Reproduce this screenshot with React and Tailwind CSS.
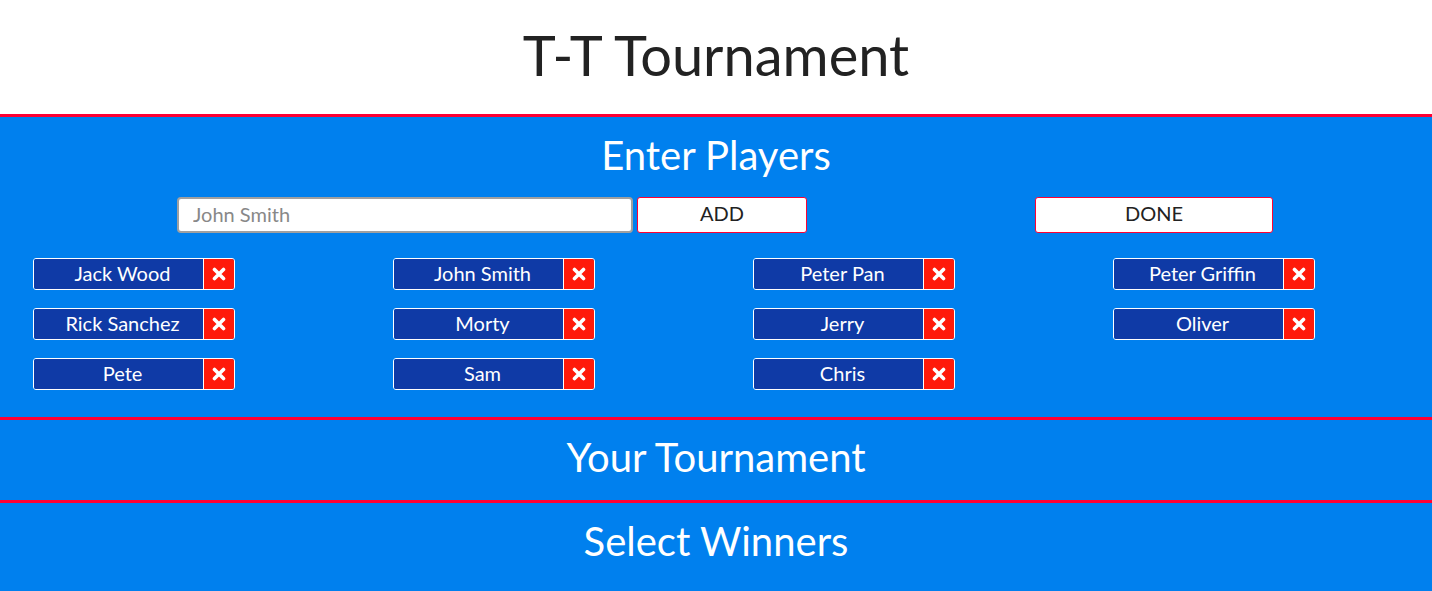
const players = [
  'Jack Wood', 'John Smith', 'Peter Pan', 'Peter Griffin',
  'Rick Sanchez', 'Morty', 'Jerry', 'Oliver',
  'Pete', 'Sam', 'Chris',
];

function PlayerTag({ name }) {
  return (
    <div className="flex h-8 w-[202px] overflow-hidden rounded-[3px] border border-white">
      <div className="flex flex-1 items-center justify-center bg-[#0f3aa6] pb-[3px] pl-[8px] text-[20px] text-white">
        {name}
      </div>
      <button className="flex w-[31px] items-center justify-center border-l border-white bg-[#ff1a0a]">
        <svg width="14" height="14" viewBox="0 0 14 14">
          <path d="M2.5 2.5 L11.5 11.5 M11.5 2.5 L2.5 11.5" stroke="white" strokeWidth="3.6" strokeLinecap="round" />
        </svg>
      </button>
    </div>
  );
}

export default function App() {
  return (
    <div className="min-h-screen bg-[#0080ee] font-['Lato','Liberation_Sans',sans-serif]">
      <header className="flex h-[114px] items-center justify-center bg-white pb-[4px]">
        <h1 className="text-[56px] text-[#222]">T-T Tournament</h1>
      </header>

      <section className="h-[303px] border-t-[3px] border-[#ff0033]">
        <h2 className="pt-[14px] text-center text-[40px] leading-[48px] text-white">Enter Players</h2>
        <div className="mt-[18px] flex h-9">
          <input
            className="ml-[177px] h-9 w-[456px] rounded-[4px] border-2 border-[#a0a0a0] bg-white px-[14px] pb-[2px] text-[20px] text-[#222] outline-none placeholder:text-[#888]"
            placeholder="John Smith"
          />
          <button className="ml-1 h-9 w-[170px] rounded-[3px] border border-[#ff0033] bg-white pb-[4px] text-[20px] text-[#222]">
            ADD
          </button>
          <button className="ml-[228px] h-9 w-[238px] rounded-[3px] border border-[#ff0033] bg-white pb-[4px] text-[20px] text-[#222]">
            DONE
          </button>
        </div>
        <div className="mt-[25px] grid grid-cols-[repeat(4,360px)] gap-y-[18px] pl-[33px]">
          {players.map((p) => (
            <PlayerTag key={p} name={p} />
          ))}
        </div>
      </section>

      <section className="flex h-[83px] items-center justify-center border-t-[3px] border-[#ff0033] pb-[6px]">
        <h2 className="text-[40px] text-white">Your Tournament</h2>
      </section>

      <section className="flex h-[88px] items-center justify-center border-t-[3px] border-[#ff0033] pb-[10px]">
        <h2 className="text-[40px] text-white">Select Winners</h2>
      </section>
    </div>
  );
}
